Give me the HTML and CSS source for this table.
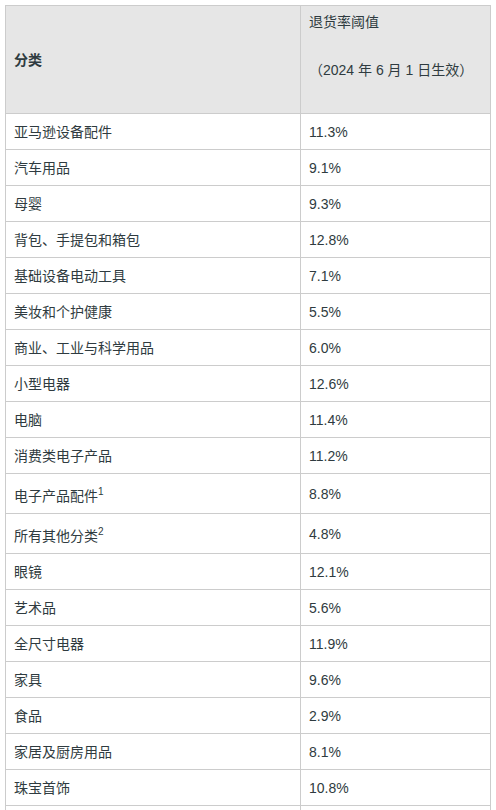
FILE: index.html
```html
<!DOCTYPE html>
<html lang="zh-CN">
<head>
<meta charset="utf-8">
<link rel="stylesheet" href="styles.css">
</head>
<body>
<table class="rate-table">
  <colgroup>
    <col class="col-cat">
    <col class="col-rate">
  </colgroup>
  <thead>
    <tr>
      <th class="th-cat">分类</th>
      <th class="th-rate">
        <div class="th-line">退货率阈值</div>
        <div class="th-line th-note">（2024 年 6 月 1 日生效）</div>
      </th>
    </tr>
  </thead>
  <tbody>
    <tr><td>亚马逊设备配件</td><td>11.3%</td></tr>
    <tr><td>汽车用品</td><td>9.1%</td></tr>
    <tr><td>母婴</td><td>9.3%</td></tr>
    <tr><td>背包、手提包和箱包</td><td>12.8%</td></tr>
    <tr><td>基础设备电动工具</td><td>7.1%</td></tr>
    <tr><td>美妆和个护健康</td><td>5.5%</td></tr>
    <tr><td>商业、工业与科学用品</td><td>6.0%</td></tr>
    <tr><td>小型电器</td><td>12.6%</td></tr>
    <tr><td>电脑</td><td>11.4%</td></tr>
    <tr><td>消费类电子产品</td><td>11.2%</td></tr>
    <tr><td>电子产品配件<sup>1</sup></td><td>8.8%</td></tr>
    <tr><td>所有其他分类<sup>2</sup></td><td>4.8%</td></tr>
    <tr><td>眼镜</td><td>12.1%</td></tr>
    <tr><td>艺术品</td><td>5.6%</td></tr>
    <tr><td>全尺寸电器</td><td>11.9%</td></tr>
    <tr><td>家具</td><td>9.6%</td></tr>
    <tr><td>食品</td><td>2.9%</td></tr>
    <tr><td>家居及厨房用品</td><td>8.1%</td></tr>
    <tr><td>珠宝首饰</td><td>10.8%</td></tr>
    <tr class="row-more"><td>&nbsp;</td><td>&nbsp;</td></tr>
  </tbody>
</table>
</body>
</html>
```

FILE: styles.css
```css
html, body {
  margin: 0;
  padding: 0;
  background: #ffffff;
}

body {
  padding: 5px;
  font-family: "Liberation Sans", "Noto Sans CJK SC", sans-serif;
  font-size: 14px;
  color: #2f3b40;
}

.rate-table {
  width: 486px;
  border-collapse: collapse;
  table-layout: fixed;
}

.col-cat {
  width: 295px;
}

.rate-table th,
.rate-table td {
  border: 1px solid #cccccc;
  text-align: left;
  vertical-align: middle;
  line-height: 20px;
  padding: 8px 8px 7px 8px;
}

.rate-table thead th {
  background: #e6e6e6;
}

.th-cat {
  font-weight: bold;
}

.rate-table .th-rate {
  font-weight: normal;
  vertical-align: top;
  line-height: 24px;
  padding: 4px 8px 7px 8px;
}

.th-note {
  margin-top: 24px;
  margin-bottom: 24px;
}

.rate-table sup {
  font-size: 10px;
  line-height: 20px;
  vertical-align: 6px;
}
```
